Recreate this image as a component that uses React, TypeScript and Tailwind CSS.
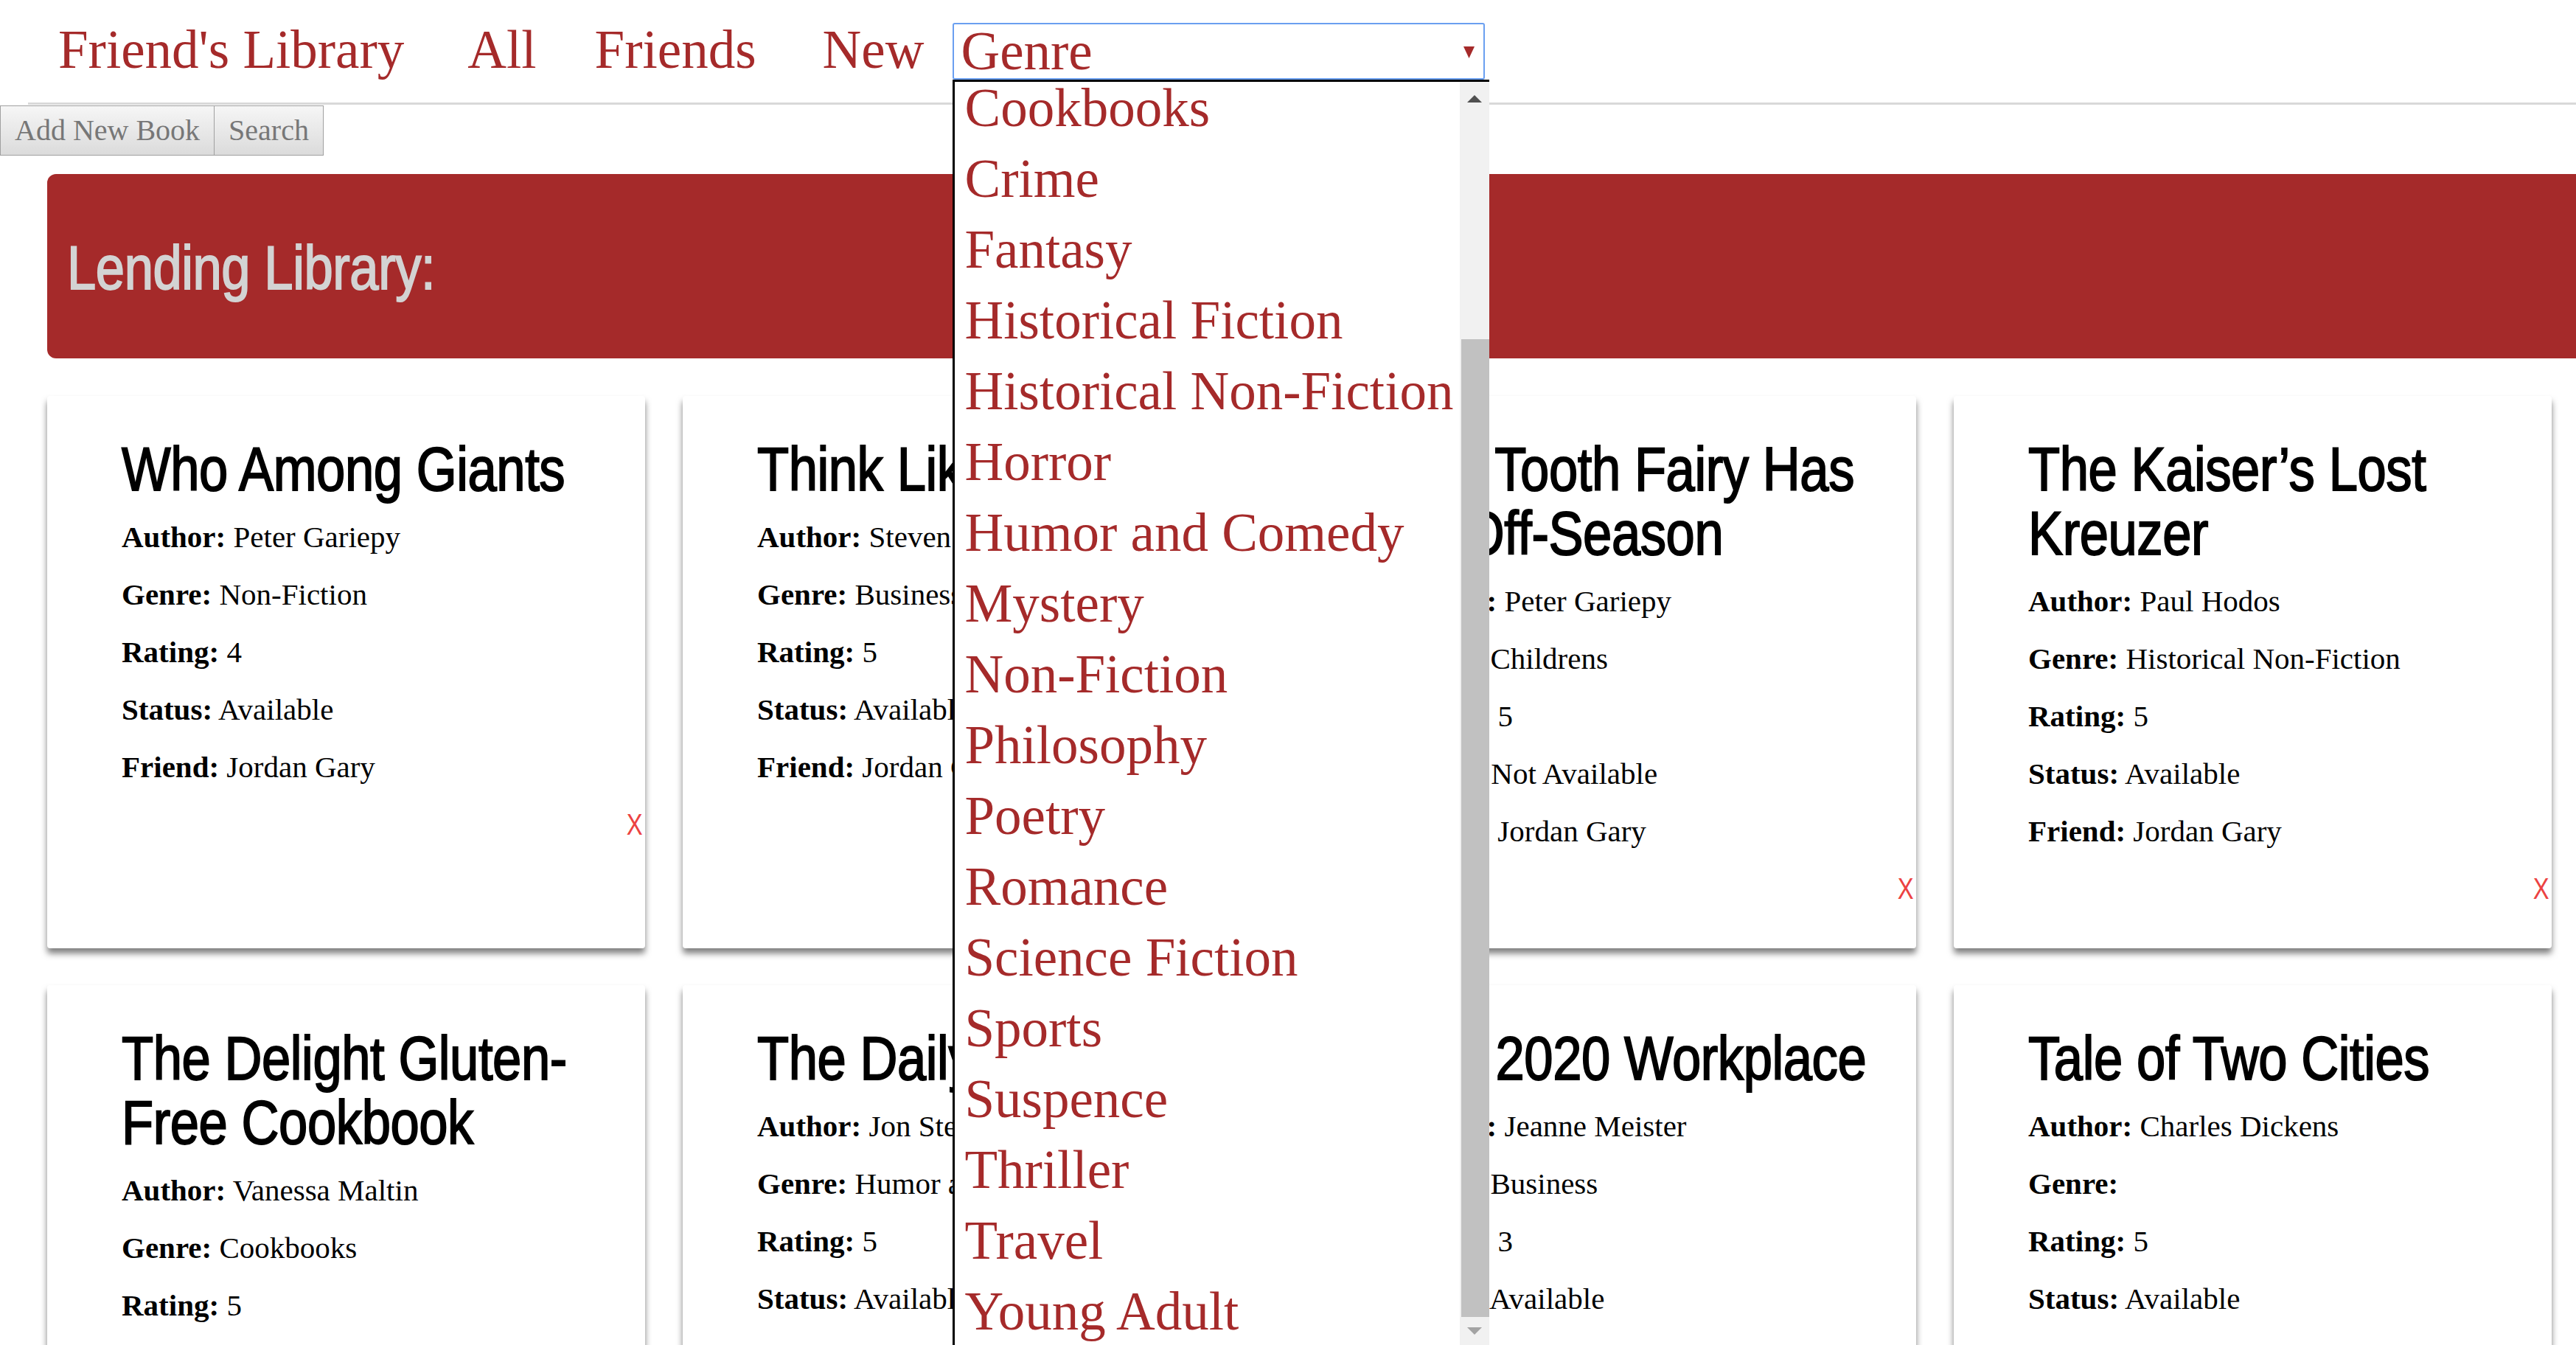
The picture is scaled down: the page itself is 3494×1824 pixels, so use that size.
import React from "react";

type Book = { title: string; rows: [string, string][] };

const books: Book[] = [
  {
    title: "Who Among Giants",
    rows: [
      ["Author", "Peter Gariepy"],
      ["Genre", "Non-Fiction"],
      ["Rating", "4"],
      ["Status", "Available"],
      ["Friend", "Jordan Gary"],
    ],
  },
  {
    title: "Think Like a Freak",
    rows: [
      ["Author", "Steven Levitt"],
      ["Genre", "Business"],
      ["Rating", "5"],
      ["Status", "Available"],
      ["Friend", "Jordan Gary"],
    ],
  },
  {
    title: "The Tooth Fairy Has an Off-Season",
    rows: [
      ["Author", "Peter Gariepy"],
      ["Genre", "Childrens"],
      ["Rating", "5"],
      ["Status", "Not Available"],
      ["Friend", "Jordan Gary"],
    ],
  },
  {
    title: "The Kaiser\u2019s Lost Kreuzer",
    rows: [
      ["Author", "Paul Hodos"],
      ["Genre", "Historical Non-Fiction"],
      ["Rating", "5"],
      ["Status", "Available"],
      ["Friend", "Jordan Gary"],
    ],
  },
  {
    title: "The Delight Gluten-Free Cookbook",
    rows: [
      ["Author", "Vanessa Maltin"],
      ["Genre", "Cookbooks"],
      ["Rating", "5"],
      ["Status", "Available"],
      ["Friend", "Jordan Gary"],
    ],
  },
  {
    title: "The Daily Show",
    rows: [
      ["Author", "Jon Stewart"],
      ["Genre", "Humor and Comedy"],
      ["Rating", "5"],
      ["Status", "Available"],
      ["Friend", "Jordan Gary"],
    ],
  },
  {
    title: "The 2020 Workplace",
    rows: [
      ["Author", "Jeanne Meister"],
      ["Genre", "Business"],
      ["Rating", "3"],
      ["Status", "Available"],
      ["Friend", "Jordan Gary"],
    ],
  },
  {
    title: "Tale of Two Cities",
    rows: [
      ["Author", "Charles Dickens"],
      ["Genre", ""],
      ["Rating", "5"],
      ["Status", "Available"],
      ["Friend", "Jordan Gary"],
    ],
  },
];

const genres = [
  "Cookbooks",
  "Crime",
  "Fantasy",
  "Historical Fiction",
  "Historical Non-Fiction",
  "Horror",
  "Humor and Comedy",
  "Mystery",
  "Non-Fiction",
  "Philosophy",
  "Poetry",
  "Romance",
  "Science Fiction",
  "Sports",
  "Suspence",
  "Thriller",
  "Travel",
  "Young Adult",
];

function Card({ book }: { book: Book }) {
  return (
    <div className="w-[811px] h-[749px] shrink-0 bg-white rounded-[4px] shadow-[0_7px_8px_rgba(0,0,0,0.5)] pl-[101px] pr-[3px] pt-[56px]">
      <h2 className="w-[786px] origin-left scale-x-[0.84] font-['Liberation_Sans',Arial,sans-serif] text-[84px] leading-[87px] font-normal tracking-[-0.5px] text-black [-webkit-text-stroke:2px_black]">
        {book.title}
      </h2>
      <div className="mt-[25px] flex flex-col gap-[31px] font-['Liberation_Serif','Times_New_Roman',serif] text-[41px] leading-[47px] text-black">
        {book.rows.map(([k, v]) => (
          <p key={k}>
            <b className="font-bold">{k}:</b> {v}
          </p>
        ))}
        <div className="flex justify-end">
          <span className="origin-right scale-x-[0.82] font-['Liberation_Sans',Arial,sans-serif] text-[40px] leading-[47px] text-[#ec4242]">
            X
          </span>
        </div>
      </div>
    </div>
  );
}

function GenreSelect() {
  return (
    <div className="relative ml-[39px] mt-[31px]">
      <div className="w-[722px] h-[77px] border-2 border-[#6a9ff0] rounded-[3px] bg-white flex items-start justify-between pl-[9px]">
        <span className="text-[73px] leading-[73px] text-[#a52a2a]">Genre</span>
        <svg width="15" height="16" viewBox="0 0 15 16" className="mt-[30px] mr-[12px]">
          <polygon points="0,0 15,0 7.5,16" fill="#a52a2a" />
        </svg>
      </div>
      <div className="absolute left-0 top-full z-10 w-[728px] h-[1716px] bg-white border-t-[3px] border-l-[3px] border-black flex overflow-hidden">
        <div className="flex-1 overflow-hidden pl-[13px]">
          <div className="-mt-[12px]">
            {genres.map((g) => (
              <div key={g} className="h-[96px] text-[73px] leading-[96px] text-[#a52a2a] whitespace-nowrap">
                {g}
              </div>
            ))}
          </div>
        </div>
        <div className="w-[40px] bg-[#f1f1f1] flex flex-col">
          <div className="h-[46px] flex items-center justify-center">
            <svg width="20" height="10" viewBox="0 0 20 10">
              <polygon points="10,0 20,10 0,10" fill="#505050" />
            </svg>
          </div>
          <div className="h-[303px]" />
          <div className="h-[1326px] ml-[2px] bg-[#c1c1c1]" />
          <div className="h-[38px] flex items-center justify-center">
            <svg width="20" height="10" viewBox="0 0 20 10">
              <polygon points="0,0 20,0 10,10" fill="#a3a3a3" />
            </svg>
          </div>
        </div>
      </div>
    </div>
  );
}

export default function App() {
  return (
    <div className="relative w-[3494px] h-[1824px] overflow-hidden bg-white font-['Liberation_Serif','Times_New_Roman',serif]">
      <nav className="ml-[38px] h-[142px] border-b-[3px] border-[#d9d9d9] flex items-start">
        <a className="ml-[41px] pt-[27px] text-[73px] leading-[81px] text-[#a52a2a] whitespace-nowrap">Friend's Library</a>
        <a className="ml-[86px] pt-[27px] text-[73px] leading-[81px] text-[#a52a2a]">All</a>
        <a className="ml-[79px] pt-[27px] text-[73px] leading-[81px] text-[#a52a2a]">Friends</a>
        <a className="ml-[90px] pt-[27px] text-[73px] leading-[81px] text-[#a52a2a]">New</a>
        <GenreSelect />
      </nav>
      <div className="flex mt-px">
        <button className="h-[68px] px-[19px] border border-[#a0a0a0] bg-linear-to-b from-[#f6f6f6] to-[#dbdbdb] text-[40px] leading-none text-[#777] whitespace-nowrap">
          Add New Book
        </button>
        <button className="h-[68px] px-[19px] border border-l-0 border-[#a0a0a0] bg-linear-to-b from-[#f6f6f6] to-[#dbdbdb] text-[40px] leading-none text-[#777]">
          Search
        </button>
      </div>
      <div className="ml-[64px] mt-[25px] h-[250px] rounded-l-[12px] bg-[#a52a2a] flex items-center pl-[27px]">
        <h1 className="w-[700px] origin-left scale-x-[0.84] font-['Liberation_Sans',Arial,sans-serif] text-[84px] leading-[87px] tracking-[-0.5px] text-[#d3d3d3] [-webkit-text-stroke:2px_#d3d3d3] pt-[4px]">
          Lending Library:
        </h1>
      </div>
      <div className="mt-[51px] pl-[64px] flex flex-wrap gap-x-[51px] gap-y-[50px]">
        {books.map((b) => (
          <Card key={b.title} book={b} />
        ))}
      </div>
    </div>
  );
}
